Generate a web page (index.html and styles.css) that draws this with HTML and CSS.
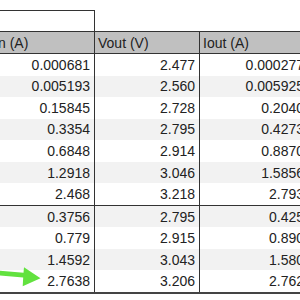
FILE: index.html
```html
<!DOCTYPE html>
<html>
<head>
<meta charset="utf-8">
<link rel="stylesheet" href="styles.css">
</head>
<body>
<div class="sheet">
  <div class="row top"><div class="cell c1"></div></div>
  <div class="row head">
    <div class="cell c1">Iin (A)</div>
    <div class="cell c2">Vout (V)</div>
    <div class="cell c3">Iout (A)</div>
  </div>
  <div class="group first">
    <div class="row data"><div class="cell c1">0.000681</div><div class="cell c2">2.477</div><div class="cell c3">0.000277</div></div>
    <div class="row data alt"><div class="cell c1">0.005193</div><div class="cell c2">2.560</div><div class="cell c3">0.005925</div></div>
    <div class="row data"><div class="cell c1">0.15845</div><div class="cell c2">2.728</div><div class="cell c3">0.2040</div></div>
    <div class="row data alt"><div class="cell c1">0.3354</div><div class="cell c2">2.795</div><div class="cell c3">0.4273</div></div>
    <div class="row data"><div class="cell c1">0.6848</div><div class="cell c2">2.914</div><div class="cell c3">0.8870</div></div>
    <div class="row data alt"><div class="cell c1">1.2918</div><div class="cell c2">3.046</div><div class="cell c3">1.5856</div></div>
    <div class="row data"><div class="cell c1">2.468</div><div class="cell c2">3.218</div><div class="cell c3">2.793</div></div>
  </div>
  <div class="group second">
    <div class="row data alt"><div class="cell c1">0.3756</div><div class="cell c2">2.795</div><div class="cell c3">0.425</div></div>
    <div class="row data"><div class="cell c1">0.779</div><div class="cell c2">2.915</div><div class="cell c3">0.890</div></div>
    <div class="row data alt"><div class="cell c1">1.4592</div><div class="cell c2">3.043</div><div class="cell c3">1.580</div></div>
    <div class="row data"><div class="cell c1">2.7638</div><div class="cell c2">3.206</div><div class="cell c3">2.762</div></div>
  </div>
</div>
<svg class="arrow" width="300" height="300" viewBox="0 0 300 300">
  <polygon points="0,270.7 23.5,272.8 24,267.3 40.5,278.2 22.7,286.2 23.2,277.6 0,275.4" fill="#62e23f"/>
</svg>
</body>
</html>
```

FILE: styles.css
```css
html, body {
  margin: 0;
  background: #ffffff;
}
body {
  font-family: "Liberation Sans", Arial, sans-serif;
  font-size: 14px;
  color: #222222;
  width: 300px;
  height: 300px;
  overflow: hidden;
  position: relative;
}
.sheet {
  margin-left: -12px;
  padding-top: 10px;
  width: 320px;
}
.row {
  display: flex;
}
.cell {
  box-sizing: border-box;
  display: flex;
  align-items: center;
  padding: 0 4px 0 3px;
  white-space: nowrap;
  overflow: hidden;
}
.c1 {
  width: 107px;
  border-right: 1px solid #333333;
}
.c2 {
  width: 105px;
  border-right: 1px solid #333333;
}
.c3 {
  width: 108px;
}
.top {
  height: 21px;
}
.top .c1 {
  border-top: 1px solid #333333;
}
.head {
  box-sizing: border-box;
  height: 23px;
  background: #c0c0c0;
  border-top: 1px solid #333333;
  border-bottom: 1px solid #333333;
}
.first {
  border-bottom: 1px solid #333333;
}
.first .data {
  height: 21.57px;
}
.second {
  border-bottom: 2px solid #444444;
}
.second .data {
  height: 21.5px;
}
.data .cell {
  justify-content: flex-end;
}
.alt {
  background: #f2f2f2;
}
.arrow {
  position: absolute;
  left: 0;
  top: 0;
  pointer-events: none;
}
```
